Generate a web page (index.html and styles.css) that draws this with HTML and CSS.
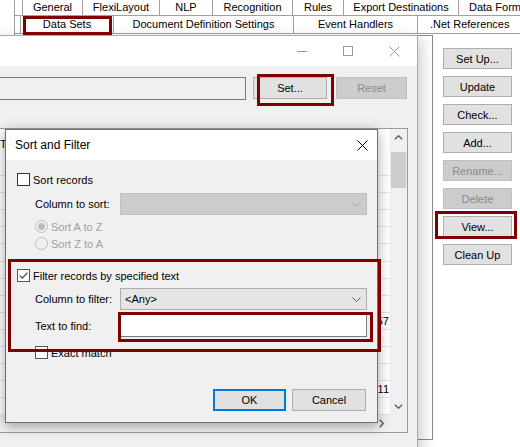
FILE: index.html
```html
<!DOCTYPE html>
<html>
<head>
<meta charset="utf-8">
<title>Sort and Filter</title>
<link rel="stylesheet" href="styles.css">
</head>
<body>
<div class="screen">
  <div class="app">
    <div class="tabs">
      <div class="tabrow row1">
        <div class="tab t-general">General</div>
        <div class="tab t-flexi">FlexiLayout</div>
        <div class="tab t-nlp">NLP</div>
        <div class="tab t-recog">Recognition</div>
        <div class="tab t-rules">Rules</div>
        <div class="tab t-export">Export Destinations</div>
        <div class="tab t-dataform">Data Form</div>
      </div>
      <div class="tabrow row2">
        <div class="tab sel t-datasets">Data Sets</div>
        <div class="tab t-docdef">Document Definition Settings</div>
        <div class="tab t-events">Event Handlers</div>
        <div class="tab t-net">.Net References</div>
      </div>
    </div>
    <div class="page">
      <div class="biglist"></div>
      <div class="btncol">
        <div class="btn side">Set Up...</div>
        <div class="btn side">Update</div>
        <div class="btn side">Check...</div>
        <div class="btn side">Add...</div>
        <div class="btn side dis">Rename...</div>
        <div class="btn side dis">Delete</div>
        <div class="btn side">View...</div>
        <div class="btn side">Clean Up</div>
      </div>
    </div>
  </div>

  <div class="win2">
    <div class="caption">
      <div class="capbtn"><svg width="10" height="1" viewBox="0 0 10 1"><rect width="10" height="1" fill="#9a9a9a"/></svg></div>
      <div class="capbtn"><svg width="10" height="10" viewBox="0 0 10 10" shape-rendering="crispEdges"><rect x="0.5" y="0.5" width="9" height="9" fill="none" stroke="#9a9a9a"/></svg></div>
      <div class="capbtn"><svg width="11" height="11" viewBox="0 0 11 11"><path d="M0.5 0.5L10.5 10.5M10.5 0.5L0.5 10.5" stroke="#9a9a9a" stroke-width="1"/></svg></div>
    </div>
    <div class="w2body">
      <div class="toolbar">
        <div class="pathfield"></div>
        <div class="btn setbtn">Set...</div>
        <div class="btn dis resetbtn">Reset</div>
      </div>
      <div class="datagrid">
        <div class="gridmain">
          <div class="gridhead">T</div>
          <div class="grow"></div>
          <div class="grow"></div>
          <div class="grow"></div>
          <div class="grow"></div>
          <div class="grow"></div>
          <div class="grow"></div>
          <div class="grow"></div>
          <div class="grow"></div>
          <div class="grow"></div>
          <div class="grow">57</div>
          <div class="grow"></div>
          <div class="grow"></div>
          <div class="grow"></div>
          <div class="grow">11</div>
          <div class="grow"></div>
          <div class="grow"></div>
        </div>
        <div class="vscroll">
          <div class="sarrow"><svg width="9" height="5" viewBox="0 0 9 5"><path d="M0.8 4.2L4.5 0.8L8.2 4.2" fill="none" stroke="#606060" stroke-width="1.5"/></svg></div>
          <div class="thumb"></div>
          <div class="vspace"></div>
          <div class="sarrow"><svg width="9" height="5" viewBox="0 0 9 5"><path d="M0.8 0.8L4.5 4.2L8.2 0.8" fill="none" stroke="#606060" stroke-width="1.5"/></svg></div>
        </div>
        <div class="hscroll">
          <div class="sarrow"><svg width="5" height="9" viewBox="0 0 5 9"><path d="M0.8 0.8L4.2 4.5L0.8 8.2" fill="none" stroke="#606060" stroke-width="1.5"/></svg></div>
        </div>
        <div class="corner"></div>
      </div>
    </div>
  </div>

  <div class="dlg">
    <div class="dlg-title">
      <span class="dlg-caption">Sort and Filter</span>
      <svg width="11" height="11" viewBox="0 0 11 11"><path d="M0.5 0.5L10.5 10.5M10.5 0.5L0.5 10.5" stroke="#000" stroke-width="1"/></svg>
    </div>
    <div class="dlg-body">
      <div class="chk-row r-sort">
        <span class="cb"></span><span>Sort records</span>
      </div>
      <div class="field-row r-colsort">
        <span class="flabel">Column to sort:</span>
        <div class="combo off"><span></span><svg width="9" height="5" viewBox="0 0 9 5"><path d="M0.5 0.5L4.5 4.5L8.5 0.5" fill="none" stroke="#a6a6a6"/></svg></div>
      </div>
      <div class="radio-row r-az">
        <svg class="radio" width="13" height="13" viewBox="0 0 13 13"><circle cx="6.5" cy="6.5" r="6" fill="#f0f0f0" stroke="#bcbcbc"/><circle cx="6.5" cy="6.5" r="3.5" fill="#bcbcbc"/></svg>
        <span class="distext">Sort A to Z</span>
      </div>
      <div class="radio-row r-za">
        <svg class="radio" width="13" height="13" viewBox="0 0 13 13"><circle cx="6.5" cy="6.5" r="6" fill="#f0f0f0" stroke="#bcbcbc"/></svg>
        <span class="distext">Sort Z to A</span>
      </div>
      <div class="chk-row r-filter">
        <span class="cb checked"><svg width="11" height="11" viewBox="0 0 11 11"><path d="M1.8 5.6L4.3 8.1L9.4 2.6" fill="none" stroke="#4a4a4a" stroke-width="1.3"/></svg></span><span>Filter records by specified text</span>
      </div>
      <div class="field-row r-colfilter">
        <span class="flabel">Column to filter:</span>
        <div class="combo"><span>&lt;Any&gt;</span><svg width="9" height="5" viewBox="0 0 9 5"><path d="M0.5 0.5L4.5 4.5L8.5 0.5" fill="none" stroke="#5a5a5a"/></svg></div>
      </div>
      <div class="field-row r-find">
        <span class="flabel">Text to find:</span>
        <div class="textbox"></div>
      </div>
      <div class="chk-row r-exact">
        <span class="cb light"></span><span>Exact match</span>
      </div>
      <div class="dlg-buttons">
        <div class="btn okbtn">OK</div>
        <div class="btn cancelbtn">Cancel</div>
      </div>
    </div>
  </div>

  <div class="mark m-datasets"></div>
  <div class="mark m-set"></div>
  <div class="mark m-view"></div>
  <div class="mark m-filter"></div>
  <div class="mark m-find"></div>
</div>
</body>
</html>
```

FILE: styles.css
```css
* { box-sizing: border-box; }
html, body { margin: 0; padding: 0; }
body {
  width: 520px;
  height: 447px;
  overflow: hidden;
  background: #fff;
  font-family: "Liberation Sans", Arial, sans-serif;
  font-size: 11px;
  color: #000;
}
.screen { position: relative; width: 520px; height: 447px; overflow: hidden; }

/* main window */
.app { display: flex; flex-direction: column; height: 447px; }
.tabs { margin-left: 14px; border-left: 1px solid #a0a0a0; height: 35px; }
.tabrow { display: flex; white-space: nowrap; }
.row1 { height: 16px; padding-left: 7px; border-bottom: 1px solid #a0a0a0; }
.row2 { height: 18px; padding-left: 5px; border-bottom: 1px solid #a0a0a0; }
.tab {
  flex: none;
  border-left: 1px solid #a0a0a0;
  text-align: center;
  overflow: hidden;
  background: #fff;
}
.row1 .tab { line-height: 15px; }
.row2 .tab { line-height: 17px; }
.t-general { width: 60px; }
.t-flexi { width: 77px; }
.t-nlp { width: 53px; }
.t-recog { width: 80px; }
.t-rules { width: 51px; }
.t-export { width: 115px; }
.t-dataform { width: 80px; text-align: left; padding-left: 10px; }
.t-datasets { width: 93px; }
.t-docdef { width: 180px; }
.t-events { width: 124px; }
.t-net { width: 110px; text-align: left; padding-left: 12px; }

.page { display: flex; align-items: flex-start; }
.biglist {
  margin-left: 14px;
  width: 419px;
  height: 405px;
  border: 1px solid #8a8a8a;
  background: #fff;
}
.btncol {
  margin-left: 10px;
  padding-top: 13px;
  width: 69px;
  display: flex;
  flex-direction: column;
  gap: 7px;
}

.btn {
  display: flex;
  align-items: center;
  justify-content: center;
  background: #e1e1e1;
  border: 1px solid #adadad;
  white-space: nowrap;
}
.btn.dis { background: #cccccc; border-color: #bfbfbf; color: #8a8a8a; }
.side { height: 21px; }

/* second window */
.win2 {
  position: absolute;
  left: -20px;
  top: 35px;
  width: 438px;
  height: 430px;
  background: #f0f0f0;
  border: 1px solid #aaaaaa;
  box-shadow: 3px 5px 14px rgba(0, 0, 0, 0.22);
}
.caption { height: 30px; background: #fff; display: flex; justify-content: flex-end; }
.capbtn { width: 46px; height: 30px; display: flex; align-items: center; justify-content: center; }
.w2body { padding: 11px 9px 0 12px; }
.toolbar { display: flex; align-items: flex-start; height: 23px; padding-right: 1px; }
.pathfield { flex: 1; height: 23px; border: 1px solid #7a7a7a; background: #f0f0f0; margin-right: 7px; }
.setbtn { width: 74px; height: 22px; }
.resetbtn { width: 71px; height: 22px; margin-left: 9px; }

.datagrid {
  margin-top: 28px;
  height: 305px;
  border: 1px solid #9a9a9a;
  background: #fff;
  display: grid;
  grid-template-columns: 1fr 17px;
  grid-template-rows: 1fr 17px;
}
.gridmain { overflow: hidden; }
.gridhead { height: 30px; line-height: 30px; padding-left: 6px; }
.grow {
  height: 17.1px;
  border-bottom: 1px solid #e4e4e4;
  text-align: right;
  padding-right: 1px;
  line-height: 16px;
}
.vscroll { background: #f0f0f0; display: flex; flex-direction: column; }
.sarrow { width: 17px; height: 17px; display: flex; align-items: center; justify-content: center; flex: none; }
.thumb { margin: 6px 1px 0 1px; height: 36px; background: #cdcdcd; flex: none; }
.vspace { flex: 1; }
.hscroll { background: #f0f0f0; display: flex; justify-content: flex-end; }
.corner { background: #f0f0f0; }

/* sort and filter dialog */
.dlg {
  position: absolute;
  left: 5px;
  top: 129px;
  width: 373px;
  height: 294px;
  background: #f0f0f0;
  border: 1px solid #707070;
  box-shadow: 0 3px 12px rgba(0, 0, 0, 0.35);
}
.dlg-title {
  height: 30px;
  background: #fff;
  display: flex;
  align-items: center;
  justify-content: space-between;
  padding: 0 9px;
  font-size: 12px;
}
.dlg-body { padding: 13px 10px 0 11px; }
.chk-row { display: flex; align-items: center; height: 13px; }
.cb {
  width: 13px;
  height: 13px;
  flex: none;
  border: 1px solid #333;
  background: #fff;
  margin-right: 3px;
  display: flex;
}
.cb.checked { border-color: #555; }
.cb.light { border-color: #555; }
.field-row { display: flex; align-items: center; margin-left: 18px; }
.flabel { width: 85px; flex: none; }
.combo {
  width: 247px;
  height: 22px;
  border: 1px solid #adadad;
  background: #e5e5e5;
  display: flex;
  align-items: center;
  justify-content: space-between;
  padding: 0 5px 0 4px;
}
.combo.off { background: #cccccc; border-color: #bfbfbf; }
.textbox { width: 247px; height: 23px; border: 1px solid #7a7a7a; background: #fff; }
.radio-row { display: flex; align-items: center; height: 13px; margin-left: 18px; }
.radio { margin-right: 3px; flex: none; }
.distext { color: #a0a0a0; }
.r-colsort { margin-top: 7px; }
.r-az { margin-top: 5px; }
.r-za { margin-top: 4px; }
.r-filter { margin-top: 19px; }
.r-colfilter { margin-top: 6px; }
.r-find { margin-top: 4px; }
.r-exact { margin-top: 9px; margin-left: 18px; }
.dlg-buttons { margin-top: 30px; margin-right: 1px; display: flex; justify-content: flex-end; gap: 6px; }
.okbtn { width: 73px; height: 22px; border: 2px solid #0078d7; }
.cancelbtn { width: 74px; height: 22px; }

/* red annotation frames */
.mark { position: absolute; border: 3px solid #7f0000; }
.m-datasets { left: 23px; top: 16px; width: 89px; height: 19px; }
.m-set { left: 257px; top: 74px; width: 77px; height: 32px; }
.m-view { left: 435px; top: 211px; width: 82px; height: 28px; }
.m-filter { left: 8px; top: 259px; width: 373px; height: 93px; }
.m-find { left: 118px; top: 312px; width: 255px; height: 30px; }
```
